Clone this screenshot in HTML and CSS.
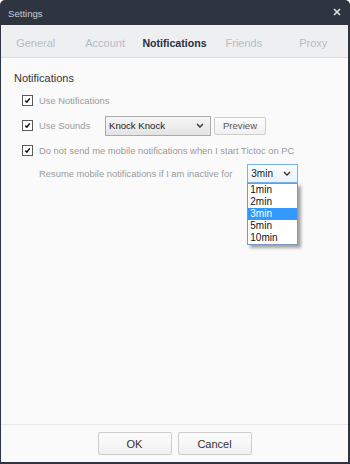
FILE: index.html
```html
<!DOCTYPE html>
<html>
<head>
<meta charset="utf-8">
<link rel="stylesheet" href="styles.css">
</head>
<body>
<div class="window">
  <div class="titlebar">
    <span class="title">Settings</span>
    <svg class="close" width="8" height="8" viewBox="0 0 8 8"><path d="M1 1L7 7M7 1L1 7" stroke="#d9dde2" stroke-width="1.7"/></svg>
  </div>
  <div class="frame">
    <div class="tabs">
      <span class="tab">General</span>
      <span class="tab">Account</span>
      <span class="tab active">Notifications</span>
      <span class="tab">Friends</span>
      <span class="tab">Proxy</span>
    </div>
    <div class="content">
      <div class="section-title">Notifications</div>
      <div class="row">
        <span class="checkbox"><svg width="9" height="9" viewBox="0 0 9 9"><path d="M2.3 4.6L3.9 6.2L6.8 2.4" stroke="#111" stroke-width="1.5" fill="none"/></svg></span>
        <span class="label">Use Notifications</span>
      </div>
      <div class="row">
        <span class="checkbox"><svg width="9" height="9" viewBox="0 0 9 9"><path d="M2.3 4.6L3.9 6.2L6.8 2.4" stroke="#111" stroke-width="1.5" fill="none"/></svg></span>
        <span class="label label-fixed">Use Sounds</span>
        <div class="select sound-select">
          <span class="select-text">Knock Knock</span>
          <svg class="chev" width="8" height="5" viewBox="0 0 8 5"><path d="M1 1L4 4L7 1" stroke="#333" stroke-width="1.4" fill="none"/></svg>
        </div>
        <button class="btn preview">Preview</button>
      </div>
      <div class="row">
        <span class="checkbox"><svg width="9" height="9" viewBox="0 0 9 9"><path d="M2.3 4.6L3.9 6.2L6.8 2.4" stroke="#111" stroke-width="1.5" fill="none"/></svg></span>
        <span class="label">Do not send me mobile notifications when I start Tictoc on PC</span>
      </div>
      <div class="resume-row">
        <span class="label">Resume mobile notifications if I am inactive for</span>
        <div class="dropdown">
          <div class="select time-select">
            <span class="select-text">3min</span>
            <svg class="chev" width="8" height="5" viewBox="0 0 8 5"><path d="M1 1L4 4L7 1" stroke="#333" stroke-width="1.4" fill="none"/></svg>
          </div>
          <ul class="list">
            <li>1min</li>
            <li>2min</li>
            <li class="selected">3min</li>
            <li>5min</li>
            <li>10min</li>
          </ul>
        </div>
      </div>
    </div>
    <div class="footer">
      <button class="btn footer-btn">OK</button>
      <button class="btn footer-btn">Cancel</button>
    </div>
  </div>
</div>
</body>
</html>
```
FILE: styles.css
```css
* { box-sizing: border-box; }
html, body { margin: 0; padding: 0; background: #ffffff; }
body { font-family: "Liberation Sans", Arial, sans-serif; }

.window {
  width: 350px;
  height: 464px;
  background: #2e3540;
  border-radius: 5px 5px 0 0;
  display: flex;
  flex-direction: column;
  overflow: hidden;
}

.titlebar {
  height: 25px;
  flex: none;
  display: flex;
  align-items: center;
  justify-content: space-between;
  padding: 1px 9px 0 8px;
}
.title {
  color: #c3c9d1;
  font-size: 9.6px;
}
.close { display: block; margin-top: -2px; }

.frame {
  flex: 1;
  margin: 0 2px 2px 1px;
  display: flex;
  flex-direction: column;
  background: #fafafa;
}

.tabs {
  height: 33px;
  flex: none;
  background: #eeeff1;
  border-bottom: 1px solid #dcdde0;
  display: grid;
  grid-template-columns: repeat(5, 1fr);
  align-items: center;
  padding-top: 4px;
}
.tab {
  text-align: center;
  font-size: 11px;
  color: #b7bcc4;
}
.tab.active {
  color: #27303d;
  font-weight: bold;
  font-size: 10.6px;
}

.content {
  flex: 1;
  padding: 12px 0 0 13px;
  display: flex;
  flex-direction: column;
}
.section-title {
  font-size: 11px;
  line-height: 16px;
  color: #333;
  height: 18px;
}

.row {
  height: 25px;
  display: flex;
  align-items: center;
  padding-left: 8px;
}
.checkbox {
  width: 11px;
  height: 11px;
  border: 1px solid #5a5a5a;
  background: #fff;
  display: flex;
  align-items: center;
  justify-content: center;
  margin-right: 6px;
  flex: none;
}
.checkbox svg { display: block; }
.label {
  font-size: 9.4px;
  color: #9a9a9a;
  white-space: nowrap;
}
.label-fixed { width: 66px; }

.select {
  display: flex;
  align-items: center;
  justify-content: space-between;
  background: linear-gradient(#f6f6f6, #e3e3e3);
  border: 1px solid #ababab;
  font-size: 9.6px;
  color: #1a1a1a;
}
.sound-select {
  width: 106px;
  height: 20px;
  padding: 0 6px 0 3px;
}
.chev { display: block; }

.btn {
  font-family: "Liberation Sans", Arial, sans-serif;
  background: linear-gradient(#fcfcfc, #f0f0f0);
  border: 1px solid #cdcdcd;
  border-radius: 2px;
  color: #555;
  padding: 0;
  cursor: default;
}
.preview {
  margin-left: 3px;
  width: 52px;
  height: 18px;
  font-size: 9.6px;
}

.resume-row {
  height: 21px;
  display: flex;
  align-items: center;
  padding-left: 25px;
}
.dropdown {
  position: relative;
  margin-left: 15px;
}
.time-select {
  width: 51px;
  height: 19px;
  padding: 0 6px 0 3px;
  border-color: #7ab2e8;
  background: linear-gradient(#fbfdff, #eaf3fc);
  font-size: 10px;
}
.list {
  position: absolute;
  left: 0;
  top: 19px;
  width: 51px;
  margin: 0;
  padding: 0;
  list-style: none;
  background: #fff;
  border: 1px solid #7e99bd;
  box-shadow: 3px 3px 3px rgba(0,0,0,0.35);
}
.list li {
  height: 12px;
  line-height: 12px;
  font-size: 10px;
  color: #111;
  padding-left: 2px;
}
.list li.selected {
  background: #3399ff;
  color: #fff;
}

.footer {
  height: 38px;
  flex: none;
  border-top: 1px solid #e8e8e8;
  display: flex;
  justify-content: center;
  gap: 6px;
  padding-top: 7px;
}
.footer-btn {
  width: 74px;
  height: 23px;
  font-size: 11px;
  color: #333;
}
```
